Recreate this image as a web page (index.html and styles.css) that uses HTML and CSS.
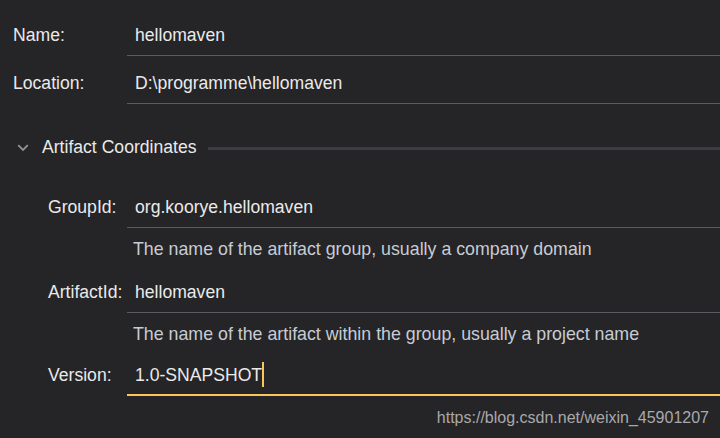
FILE: index.html
```html
<!DOCTYPE html>
<html>
<head>
<meta charset="utf-8">
<link rel="stylesheet" href="styles.css">
</head>
<body>
<div class="form">
  <div class="field top">
    <div class="label">Name:</div>
    <div class="input">hellomaven</div>
  </div>
  <div class="field top second">
    <div class="label">Location:</div>
    <div class="input">D:\programme\hellomaven</div>
  </div>
  <div class="section">
    <svg class="chev" width="12" height="8" viewBox="0 0 12 8"><polyline points="1.2,1.2 6,6 10.8,1.2" fill="none" stroke="#929295" stroke-width="1.8"/></svg>
    <span class="section-title">Artifact Coordinates</span>
    <span class="section-line"></span>
  </div>
  <div class="field nested">
    <div class="label">GroupId:</div>
    <div class="input">org.koorye.hellomaven</div>
  </div>
  <div class="desc">The name of the artifact group, usually a company domain</div>
  <div class="field nested">
    <div class="label">ArtifactId:</div>
    <div class="input">hellomaven</div>
  </div>
  <div class="desc last">The name of the artifact within the group, usually a project name</div>
  <div class="field nested">
    <div class="label">Version:</div>
    <div class="input focused"><span>1.0-SNAPSHOT</span><span class="caret"></span></div>
  </div>
</div>
<div class="watermark">https://blog.csdn.net/weixin_45901207</div>
</body>
</html>
```

FILE: styles.css
```css
html, body {
  margin: 0;
  padding: 0;
  background: #252427;
  width: 720px;
  height: 438px;
  overflow: hidden;
}
body {
  position: relative;
  font-family: "Liberation Sans", Arial, sans-serif;
  font-size: 17.6px;
  color: #eaeaea;
}
.form {
  padding-top: 25px;
}
.field {
  display: flex;
  align-items: flex-start;
}
.label {
  box-sizing: border-box;
  width: 127px;
  line-height: 20px;
  white-space: nowrap;
}
.top .label {
  padding-left: 13px;
}
.nested .label {
  padding-left: 48px;
}
.input {
  flex: 1;
  height: 20px;
  line-height: 20px;
  padding: 0 0 10px 8px;
  border-bottom: 1px solid #5b5a5e;
  white-space: nowrap;
  display: flex;
  align-items: center;
}
.second {
  margin-top: 17px;
}
.section {
  display: flex;
  align-items: center;
  height: 20px;
  margin-top: 33px;
  margin-bottom: 40px;
}
.chev {
  margin-left: 17px;
  margin-right: 13px;
  margin-top: 1px;
}
.section-title {
  line-height: 20px;
  white-space: nowrap;
}
.section-line {
  flex: 1;
  height: 3px;
  background: #3d3c40;
  margin-left: 11px;
  margin-top: 2px;
}
.desc {
  box-sizing: border-box;
  height: 54px;
  padding: 11px 0 0 133px;
  line-height: 20px;
  font-size: 17.8px;
  color: #c7ccd3;
  white-space: nowrap;
}
.desc.last {
  height: 52px;
}
.input.focused {
  border-bottom: 2px solid #f7c65e;
  padding-bottom: 9px;
}
.caret {
  display: inline-block;
  width: 2px;
  height: 25px;
  background: #f7c65e;
  margin: -3px 0 -2px 0;
}
.watermark {
  position: absolute;
  right: 11px;
  top: 408px;
  font-size: 16px;
  line-height: 20px;
  color: #a9a9ab;
}
```
